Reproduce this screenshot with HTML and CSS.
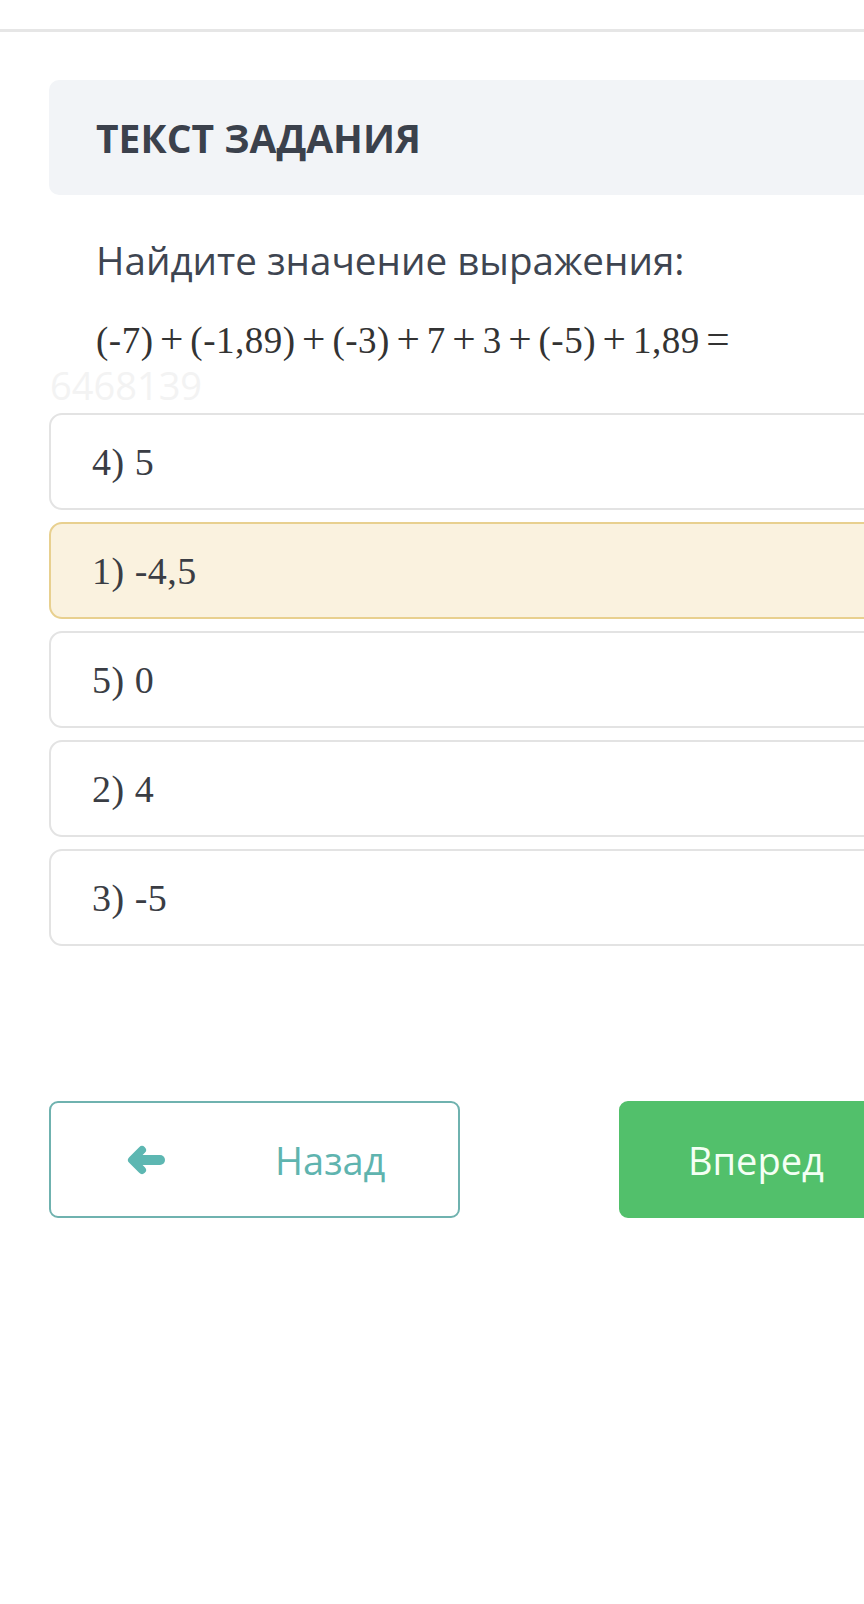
FILE: index.html
```html
<!DOCTYPE html>
<html lang="ru">
<head>
<meta charset="utf-8">
<link rel="stylesheet" href="styles.css">
</head>
<body>
<div class="topbar"></div>
<main class="main">
  <div class="task-header">ТЕКСТ ЗАДАНИЯ</div>
  <div class="question">
    <p class="question-text">Найдите значение выражения:</p>
    <p class="expr">(-7)<span class="op">+</span>(-1,89)<span class="op">+</span>(-3)<span class="op">+</span>7<span class="op">+</span>3<span class="op">+</span>(-5)<span class="op">+</span>1,89<span class="op">=</span></p>
  </div>
  <div class="watermark">6468139</div>
  <ul class="options">
    <li class="option">4) 5</li>
    <li class="option selected">1) -4,5</li>
    <li class="option">5) 0</li>
    <li class="option">2) 4</li>
    <li class="option">3) -5</li>
  </ul>
  <div class="nav">
    <button class="btn btn-back">
      <svg class="arrow" width="40" height="30" viewBox="0 0 40 30" aria-hidden="true">
        <path d="M16 5 L6 15 L16 25" fill="#5db7b2" stroke="#5db7b2" stroke-width="8" stroke-linejoin="round" stroke-linecap="round"/>
        <path d="M10 15 H34" stroke="#5db7b2" stroke-width="10" stroke-linecap="round"/>
      </svg>
      <span>Назад</span>
    </button>
    <button class="btn btn-next">Вперед</button>
  </div>
</main>
</body>
</html>
```
FILE: styles.css
```css
html, body {
  margin: 0;
  padding: 0;
  background: #ffffff;
  overflow: hidden;
}

body {
  width: 864px;
  height: 1604px;
  font-family: "Open Sans", "Noto Sans", sans-serif;
  color: #3c4350;
}

.topbar {
  height: 29px;
  border-bottom: 3px solid #e6e6e6;
}

.main {
  margin-left: 49px;
  margin-top: 48px;
  width: 990px;
}

.task-header {
  height: 115px;
  box-sizing: border-box;
  background: #f2f4f7;
  border-radius: 10px;
  padding-left: 47px;
  display: flex;
  align-items: center;
  font-size: 39px;
  font-weight: 700;
  color: #3b414c;
}

.question {
  padding-left: 47px;
  margin-top: 39px;
}

.question-text {
  margin: 0;
  font-size: 38.6px;
  line-height: 52px;
  color: #3e4551;
}

.expr {
  margin: 32px 0 0 0;
  font-family: "Liberation Serif", "Times New Roman", serif;
  font-size: 37px;
  line-height: 46px;
  color: #333;
  letter-spacing: 0.5px;
}

.op {
  margin: 0 6.5px;
  font-size: 1.12em;
  line-height: 1;
}

.watermark {
  margin-top: 1px;
  margin-left: 1px;
  font-size: 38px;
  line-height: 40px;
  height: 40px;
  color: #f3f3f3;
}

.options {
  list-style: none;
  margin: 8px 0 0 0;
  padding: 0;
  display: flex;
  flex-direction: column;
  gap: 12px;
}

.option {
  height: 97px;
  box-sizing: border-box;
  border: 2px solid #e3e3e3;
  border-radius: 13px;
  background: #ffffff;
  padding-left: 41px;
  display: flex;
  align-items: center;
  font-family: "Liberation Serif", "Times New Roman", serif;
  font-size: 38px;
  color: #3a3d44;
  letter-spacing: 0.5px;
}

.option.selected {
  background: #faf2df;
  border-color: #e8d08f;
}

.nav {
  margin-top: 155px;
  display: flex;
  gap: 159px;
}

.btn {
  height: 117px;
  box-sizing: border-box;
  width: 411px;
  border-radius: 9px;
  font-family: "Open Sans", "Noto Sans", sans-serif;
  font-size: 38px;
  display: flex;
  align-items: center;
  padding: 0;
  cursor: pointer;
}

.btn-back {
  border: 2px solid #6fb2af;
  background: #ffffff;
  color: #5fb4af;
  padding-left: 75px;
  gap: 109px;
}

.arrow {
  display: block;
  flex: none;
}

.btn-next {
  border: 2px solid #52c06b;
  background: #52c06b;
  color: #f4fff4;
  padding-left: 67px;
}
```
